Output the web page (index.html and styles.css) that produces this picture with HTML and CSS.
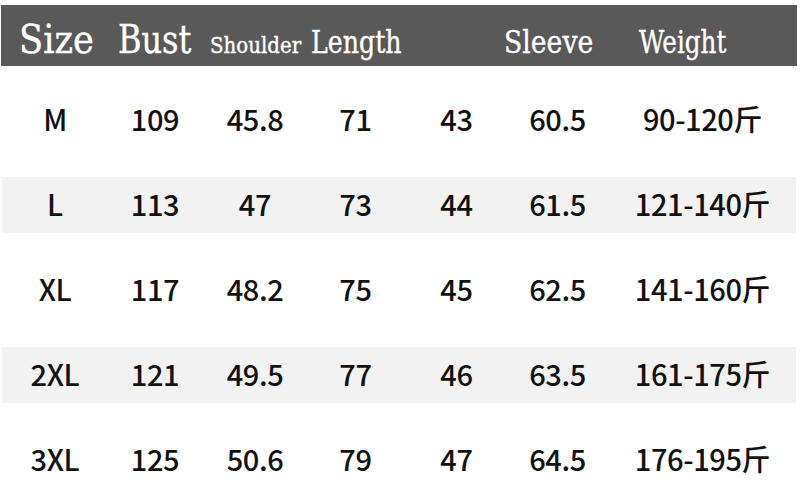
FILE: index.html
```html
<!DOCTYPE html>
<html>
<head>
<meta charset="utf-8">
<link rel="stylesheet" href="styles.css">
</head>
<body>
<div class="chart">
  <div class="head">
    <div class="hc c1"><span class="lbl big s-size">Size</span></div>
    <div class="hc c2"><span class="lbl big s-bust">Bust</span></div>
    <div class="hc c3"><span class="lbl small s-shoulder">Shoulder</span></div>
    <div class="hc c4"><span class="lbl mid s-length">Length</span></div>
    <div class="hc c5"></div>
    <div class="hc c6"><span class="lbl mid s-sleeve">Sleeve</span></div>
    <div class="hc c7"><span class="lbl mid s-weight">Weight</span></div>
  </div>
  <div class="row"><div>M</div><div>109</div><div>45.8</div><div>71</div><div>43</div><div>60.5</div><div>90-120斤</div></div>
  <div class="row alt"><div>L</div><div>113</div><div>47</div><div>73</div><div>44</div><div>61.5</div><div>121-140斤</div></div>
  <div class="row"><div>XL</div><div>117</div><div>48.2</div><div>75</div><div>45</div><div>62.5</div><div>141-160斤</div></div>
  <div class="row alt"><div>2XL</div><div>121</div><div>49.5</div><div>77</div><div>46</div><div>63.5</div><div>161-175斤</div></div>
  <div class="row"><div>3XL</div><div>125</div><div>50.6</div><div>79</div><div>47</div><div>64.5</div><div>176-195斤</div></div>
</div>
</body>
</html>
```
FILE: styles.css
```css
html, body {
  margin: 0;
  padding: 0;
  background: #ffffff;
}
.chart {
  width: 800px;
  height: 500px;
  padding-top: 5px;
  box-sizing: border-box;
  overflow: hidden;
}
.head {
  margin: 0 3px 0 1px;
  height: 61px;
  box-sizing: border-box;
  background: #595959;
  display: grid;
  grid-template-columns: 104px 100px 100px 101px 101px 101px 189px;
  align-items: baseline;
  padding-top: 15px;
  color: #ffffff;
  font-family: "DejaVu Serif", "Liberation Serif", serif;
}
.lbl {
  display: inline-block;
  white-space: nowrap;
  line-height: 1;
  transform-origin: left bottom;
  -webkit-text-stroke: 0.4px #ffffff;
}
.big { font-size: 39px; }
.mid { font-size: 32px; }
.small { font-size: 22px; }
.s-size { transform: scaleX(0.905); }
.s-bust { transform: scaleX(0.82); }
.s-shoulder { transform: scaleX(0.90); }
.s-length { transform: scaleX(0.79); }
.s-sleeve { transform: scaleX(0.834); }
.s-weight { transform: scaleX(0.77); }
.c1 { padding-left: 18px; }
.c2 { padding-left: 13px; }
.c3 { padding-left: 5px; }
.c4 { padding-left: 6px; }
.c6 { margin-left: -3px; }
.c7 { padding-left: 31px; }
.row {
  margin: 26px 4px 0 2px;
  height: 56px;
  box-sizing: border-box;
  padding-left: 3px;
  padding-bottom: 4px;
  display: grid;
  grid-template-columns: 100px 100px 100px 101px 101px 101px 189px;
  align-items: center;
  text-align: center;
  font-family: "Noto Sans CJK SC", sans-serif;
  font-size: 29px;
  font-weight: 500;
  letter-spacing: -0.4px;
  line-height: 52px;
  color: #111111;
}
.row + .row { margin-top: 29px; }
.row.alt { background: #f2f2f2; }
```
